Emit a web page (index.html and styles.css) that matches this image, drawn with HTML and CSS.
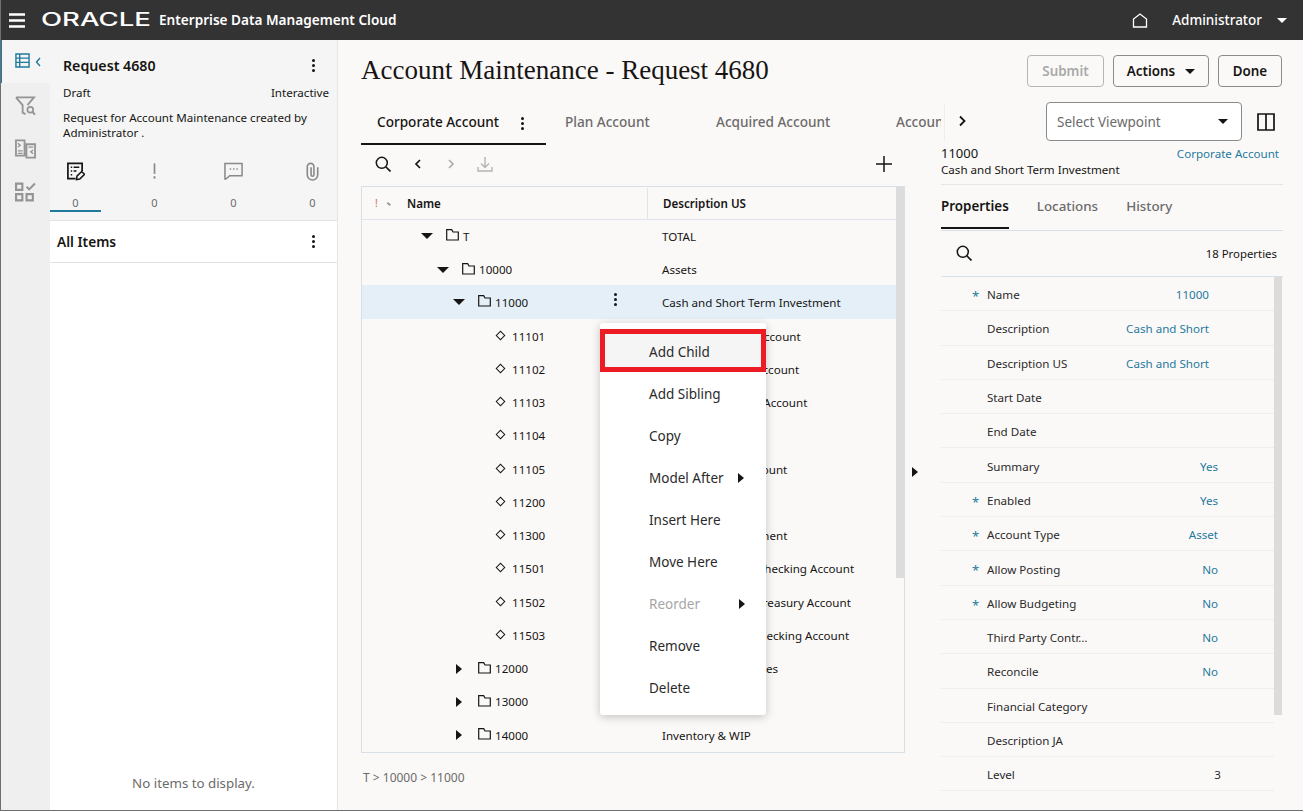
FILE: index.html
```html
<!DOCTYPE html>
<html lang="en">
<head>
<meta charset="utf-8">
<title>Account Maintenance - Request 4680</title>
<link rel="stylesheet" href="styles.css">
</head>
<body>
<header class="topbar">
  <svg class="burger" viewBox="0 0 16 15"><path d="M0 1.500h16M0 7.500h16M0 13.500h16" stroke="#fff" stroke-width="2.400"/></svg>
  <span class="logo-box"><span class="logo">ORACLE</span></span>
  <span class="product">Enterprise Data Management Cloud</span>
  <span class="spacer"></span>
  <svg class="home" viewBox="0 0 16 15"><path d="M1.500 14V6L8 1l6.500 5v8z" fill="none" stroke="#fff" stroke-width="1.300"/></svg>
  <span class="user">Administrator</span>
  <span class="caret-white"></span>
</header>
<div class="app">
  <nav class="rail">
    <div class="rail-item active">
      <svg class="rail-icon" viewBox="0 0 16 16"><path d="M1 1h14v14H1zM1 5.500h14M1 10h14M5 1v14" fill="none" stroke="#1f7a9e" stroke-width="1.500"/></svg>
      <svg class="rail-chev" viewBox="0 0 6 10"><path d="M5 1 1.500 5 5 9" fill="none" stroke="#1f7a9e" stroke-width="1.400"/></svg>
    </div>
    <div class="rail-item">
      <svg class="rail-big" viewBox="0 0 22 20"><path d="M1 1h19l-7 8M1 1l7 8v8l3 1.500" fill="none" stroke="#949494" stroke-width="1.900"/><circle cx="16" cy="14" r="3" fill="none" stroke="#949494" stroke-width="1.800"/><path d="m18 16 3 3" stroke="#949494" stroke-width="2"/></svg>
    </div>
    <div class="rail-item">
      <svg class="rail-big" viewBox="0 0 22 20"><path d="M1 1h9v16H1zM12 5h9v14h-9z" fill="none" stroke="#949494" stroke-width="1.900"/><path d="M3 4l2.500 2L3 8M3 12h5M3 14.500h5M14 8h5M19 11l-2.500 2 2.500 2" fill="none" stroke="#949494" stroke-width="1.400"/></svg>
    </div>
    <div class="rail-item">
      <svg class="rail-big" viewBox="0 0 20 18"><path d="M1 1h6v6H1zM1 11h6v6H1zM11 11h6v6h-6z" fill="none" stroke="#949494" stroke-width="2"/><path d="m11 4 2.500 2.500L19 1" fill="none" stroke="#949494" stroke-width="2"/></svg>
    </div>
  </nav>
  <aside class="side">
    <section class="side-top">
      <div class="req-head"><span class="req-title">Request 4680</span><span class="kebab"><i></i><i></i><i></i></span></div>
      <div class="req-meta"><span>Draft</span><span>Interactive</span></div>
      <p class="req-desc">Request for Account Maintenance created by Administrator .</p>
      <div class="counts">
        <div class="count on">
          <svg class="count-icon" viewBox="0 0 20 20"><path d="M10 18H2V2h15v8" fill="none" stroke="#161513" stroke-width="1.800"/><path d="M5 6h1.500M8 6h6M5 10h1.500M8 10h3M5 14h1.500" stroke="#161513" stroke-width="1.600"/><path d="m11 19 .5-3.500 5-5 3 3-5 5z" fill="none" stroke="#161513" stroke-width="1.600"/></svg>
          <span>0</span>
        </div>
        <div class="count">
          <svg class="count-icon" viewBox="0 0 20 20"><path d="M10 2v11" stroke="#8a8a8a" stroke-width="1.800"/><path d="M10 15.500v2.500" stroke="#8a8a8a" stroke-width="2"/></svg>
          <span>0</span>
        </div>
        <div class="count">
          <svg class="count-icon" viewBox="0 0 20 20"><path d="M1 2h18v13H6l-4 3.500H1z" fill="none" stroke="#8a8a8a" stroke-width="1.600"/><path d="M6 8h1.500M9.500 8H11M13 8h1.500" stroke="#8a8a8a" stroke-width="1.600"/></svg>
          <span>0</span>
        </div>
        <div class="count">
          <svg class="count-icon" viewBox="0 0 20 20"><path d="M15.500 6v8a5.500 5.500 0 0 1-11 0V5.500a3.500 3.500 0 0 1 7 0V14a1.500 1.500 0 0 1-3 0V6" fill="none" stroke="#8a8a8a" stroke-width="1.700"/></svg>
          <span>0</span>
        </div>
      </div>
    </section>
    <section class="side-list">
      <div class="list-head"><span>All Items</span><span class="kebab"><i></i><i></i><i></i></span></div>
      <div class="list-empty">No items to display.</div>
    </section>
  </aside>
  <main class="main">
    <div class="title-row">
      <h1>Account Maintenance - Request 4680</h1>
      <div class="btns">
        <button class="btn disabled">Submit</button>
        <button class="btn actions">Actions<span class="caret"></span></button>
        <button class="btn done">Done</button>
      </div>
    </div>
    <div class="panes">
      <section class="center">
        <div class="tabs">
          <div class="tab current"><span>Corporate Account</span><span class="kebab"><i></i><i></i><i></i></span></div>
          <div class="tab t2">Plan Account</div>
          <div class="tab t3">Acquired Account</div>
          <div class="tab t4">Account Mapping</div>
        </div>
        <div class="tools">
          <svg class="tool search" viewBox="0 0 16 16"><circle cx="6.800" cy="6.800" r="5.500" fill="none" stroke="#161513" stroke-width="1.500"/><path d="m11 11 4.500 4.500" stroke="#161513" stroke-width="1.700"/></svg>
          <svg class="tool chev" viewBox="0 0 8 12"><path d="M6 2 2 6l4 4" fill="none" stroke="#161513" stroke-width="1.700"/></svg>
          <svg class="tool chev off" viewBox="0 0 8 12"><path d="m2 2 4 4-4 4" fill="none" stroke="#aaa" stroke-width="1.600"/></svg>
          <svg class="tool dl" viewBox="0 0 16 16"><path d="M8 1v10M4 7.500l4 4 4-4M1 11v4h14v-4" fill="none" stroke="#b4b4b4" stroke-width="1.400"/></svg>
          <svg class="tool plus" viewBox="0 0 16 16"><path d="M8 0v16M0 8h16" stroke="#161513" stroke-width="1.500"/></svg>
        </div>
        <div class="tree-area">
          <div class="grid">
            <div class="grid-body">
              <div class="row head">
                <div class="cell-name"><span class="warn">!</span><span class="sort"></span><b>Name</b></div>
                <div class="cell-desc"><b>Description US</b></div>
              </div>
              <div class="row"><div class="cell-name l0"><span class="tri down"></span><svg class="folder" viewBox="0 0 13 12"><path d="M.7.7h5l1.300 2.300h5.300v8H.7z" fill="none" stroke="#161513" stroke-width="1.200"/></svg>T</div><div class="cell-desc">TOTAL</div></div>
              <div class="row"><div class="cell-name l1"><span class="tri down"></span><svg class="folder" viewBox="0 0 13 12"><path d="M.7.7h5l1.300 2.300h5.300v8H.7z" fill="none" stroke="#161513" stroke-width="1.200"/></svg>10000</div><div class="cell-desc">Assets</div></div>
              <div class="row selected"><div class="cell-name l2"><span class="tri down"></span><svg class="folder" viewBox="0 0 13 12"><path d="M.7.7h5l1.300 2.300h5.300v8H.7z" fill="none" stroke="#161513" stroke-width="1.200"/></svg>11000<span class="kebab row-kebab"><i></i><i></i><i></i></span></div><div class="cell-desc">Cash and Short Term Investment</div></div>
              <div class="row"><div class="cell-name leaf"><span class="diamond"></span>11101</div><div class="cell-desc">Cash - Operating Account</div></div>
              <div class="row"><div class="cell-name leaf"><span class="diamond"></span>11102</div><div class="cell-desc">Cash - Collection Account</div></div>
              <div class="row"><div class="cell-name leaf"><span class="diamond"></span>11103</div><div class="cell-desc">Cash - Investment Account</div></div>
              <div class="row"><div class="cell-name leaf"><span class="diamond"></span>11104</div><div class="cell-desc">Petty Cash</div></div>
              <div class="row"><div class="cell-name leaf"><span class="diamond"></span>11105</div><div class="cell-desc">Cash - Deposit Account</div></div>
              <div class="row"><div class="cell-name leaf"><span class="diamond"></span>11200</div><div class="cell-desc">Cash in Bank</div></div>
              <div class="row"><div class="cell-name leaf"><span class="diamond"></span>11300</div><div class="cell-desc">Short Term Investment</div></div>
              <div class="row"><div class="cell-name leaf"><span class="diamond"></span>11501</div><div class="cell-desc">Cash - Euro Bank Checking Account</div></div>
              <div class="row"><div class="cell-name leaf"><span class="diamond"></span>11502</div><div class="cell-desc">Cash - Euro Bank Treasury Account</div></div>
              <div class="row"><div class="cell-name leaf"><span class="diamond"></span>11503</div><div class="cell-desc">Cash - US Dollar Checking Account</div></div>
              <div class="row"><div class="cell-name l2"><span class="tri right"></span><svg class="folder" viewBox="0 0 13 12"><path d="M.7.7h5l1.300 2.300h5.300v8H.7z" fill="none" stroke="#161513" stroke-width="1.200"/></svg>12000</div><div class="cell-desc">Accounts Receivables</div></div>
              <div class="row"><div class="cell-name l2"><span class="tri right"></span><svg class="folder" viewBox="0 0 13 12"><path d="M.7.7h5l1.300 2.300h5.300v8H.7z" fill="none" stroke="#161513" stroke-width="1.200"/></svg>13000</div><div class="cell-desc">Prepaids</div></div>
              <div class="row"><div class="cell-name l2"><span class="tri right"></span><svg class="folder" viewBox="0 0 13 12"><path d="M.7.7h5l1.300 2.300h5.300v8H.7z" fill="none" stroke="#161513" stroke-width="1.200"/></svg>14000</div><div class="cell-desc">Inventory &amp; WIP</div></div>
            </div>
            <div class="scroll-track"><div class="scroll-thumb"></div></div>
            <ul class="menu">
              <li class="flagged">Add Child</li>
              <li>Add Sibling</li>
              <li>Copy</li>
              <li>Model After<span class="tri right sub"></span></li>
              <li>Insert Here</li>
              <li>Move Here</li>
              <li class="muted">Reorder<span class="tri right sub"></span></li>
              <li>Remove</li>
              <li>Delete</li>
            </ul>
          </div>
          <div class="splitter"><span class="tri right"></span></div>
        </div>
        <div class="crumb">T &gt; 10000 &gt; 11000</div>
      </section>
      <section class="detail">
        <div class="view-row">
          <svg class="view-chev" viewBox="0 0 8 12"><path d="m2 1.500 4.500 4.500L2 10.500" fill="none" stroke="#161513" stroke-width="1.800"/></svg>
          <div class="select"><span>Select Viewpoint</span><span class="caret"></span></div>
          <svg class="split" viewBox="0 0 18 18"><path d="M1 1h16v16H1zM9 1v16" fill="none" stroke="#161513" stroke-width="1.700"/></svg>
        </div>
        <div class="node-head">
          <div class="node-line"><span class="node-id">11000</span><span class="link">Corporate Account</span></div>
          <div class="node-desc">Cash and Short Term Investment</div>
        </div>
        <div class="d-tabs">
          <span class="d-tab on">Properties</span><span class="d-tab">Locations</span><span class="d-tab">History</span>
        </div>
        <div class="prop-tools">
          <svg class="tool search" viewBox="0 0 16 16"><circle cx="6.800" cy="6.800" r="5.500" fill="none" stroke="#161513" stroke-width="1.500"/><path d="m11 11 4.500 4.500" stroke="#161513" stroke-width="1.700"/></svg>
          <span>18 Properties</span>
        </div>
        <div class="props">
          <div class="prop-list">
            <div class="prop req"><span class="p-label">Name</span><span class="p-val wide">11000</span></div>
            <div class="prop"><span class="p-label">Description</span><span class="p-val wide">Cash and Short</span></div>
            <div class="prop"><span class="p-label">Description US</span><span class="p-val wide">Cash and Short</span></div>
            <div class="prop"><span class="p-label">Start Date</span></div>
            <div class="prop"><span class="p-label">End Date</span></div>
            <div class="prop"><span class="p-label">Summary</span><span class="p-val">Yes</span></div>
            <div class="prop req"><span class="p-label">Enabled</span><span class="p-val">Yes</span></div>
            <div class="prop req"><span class="p-label">Account Type</span><span class="p-val">Asset</span></div>
            <div class="prop req"><span class="p-label">Allow Posting</span><span class="p-val">No</span></div>
            <div class="prop req"><span class="p-label">Allow Budgeting</span><span class="p-val">No</span></div>
            <div class="prop"><span class="p-label">Third Party Contr…</span><span class="p-val">No</span></div>
            <div class="prop"><span class="p-label">Reconcile</span><span class="p-val">No</span></div>
            <div class="prop"><span class="p-label">Financial Category</span></div>
            <div class="prop"><span class="p-label">Description JA</span></div>
            <div class="prop"><span class="p-label">Level</span><span class="p-val plain">3</span></div>
          </div>
          <div class="prop-scroll"></div>
        </div>
      </section>
    </div>
  </main>
</div>
</body>
</html>
```
FILE: styles.css
```css
* { box-sizing: border-box; }
html, body { margin: 0; padding: 0; height: 100%; overflow: hidden; }
body {
  width: 1303px; height: 811px;
  display: flex; flex-direction: column;
  font-family: "Noto Sans", "Open Sans", sans-serif;
  font-size: 11.600px; color: #161513;
  background: #fbf9f8;
  border-left: 1px solid #6f6f6f;
  border-bottom: 1px solid #6f6f6f;
}
.topbar { height: 40px; flex: none; background: #333; display: flex; align-items: center; color: #fff; margin-left: -1px; }
.burger { width: 16px; height: 15px; margin-left: 9px; }
.logo-box { width: 108px; margin-left: 17px; overflow: visible; }
.logo { display: inline-block; font: 500 18px/18px Inter, sans-serif; transform: scaleX(1.530); transform-origin: left center; color: #fff; margin-left: -1px; }
.product { margin-left: 9px; font-size: 13.600px; font-weight: 600; margin-top: -2px; }
.spacer { flex: 1; }
.home { width: 16px; height: 15px; margin-right: 24px; }
.user { font-size: 13.500px; font-weight: 500; margin-right: 15px; }
.caret-white { width: 0; height: 0; border: 5px solid transparent; border-top: 5px solid #fff; border-bottom: 0; margin-right: 16px; }

.app { flex: 1; min-height: 0; display: flex; }
.rail { width: 49px; flex: none; background: #efefef; }
.rail-item { height: 43px; display: flex; align-items: center; justify-content: center; padding-top: 2px; }
.rail-item.active { background: #f5f5f5; border-left: 2px solid #1f7a9e; margin-left: -1px; width: 50px; justify-content: flex-start; padding: 0 0 2px 13px; gap: 5px; }
.rail-icon { width: 15px; height: 15px; }
.rail-chev { width: 6px; height: 10px; margin-top: 3px; }
.rail-big { width: 21px; height: 20px; margin-top: 1px; }

.side { width: 288px; flex: none; display: flex; flex-direction: column; background: #fff; border-right: 1px solid #e6e6e6; }
.side-top { height: 181px; flex: none; background: #f5f5f5; border-bottom: 1px solid #dfe4e8; padding-top: 15px; }
.req-head { display: flex; justify-content: space-between; align-items: center; padding: 0 22px 0 13px; height: 20px; }
.req-title { font-size: 14.200px; font-weight: 600; }
.kebab { display: inline-flex; flex-direction: column; gap: 2px; width: 3px; }
.kebab i { display: block; width: 3px; height: 3px; border-radius: 50%; background: #161513; }
.req-meta { display: flex; justify-content: space-between; padding: 0 8px 0 13px; margin-top: 10px; line-height: 16px; }
.req-desc { margin: 9px 8px 0 13px; line-height: 15px; }
.counts { display: grid; grid-template-columns: repeat(4, 51px); gap: 28px; margin-top: 21px; }
.count { height: 51px; display: flex; flex-direction: column; align-items: center; color: #6b6b6b; font-size: 11px; border-bottom: 2px solid transparent; }
.count.on { border-bottom-color: #1f7a9e; }
.count-icon { width: 19px; height: 20px; margin-bottom: 14px; flex: none; }
.count span { line-height: 15px; }
.side-list { flex: 1; display: flex; flex-direction: column; }
.list-head { height: 42px; border-bottom: 1px solid #dfe4e8; display: flex; justify-content: space-between; align-items: center; padding: 0 22px 0 7px; font-size: 13.700px; font-weight: 600; }
.list-empty { margin-top: auto; margin-bottom: 18px; text-align: center; color: #6b6b6b; font-size: 13.300px; line-height: 18px; }

.main { flex: 1; min-width: 0; padding-left: 23px; display: flex; flex-direction: column; }
.title-row { height: 62px; flex: none; display: flex; justify-content: space-between; padding: 14px 21px 0 0; }
h1 { margin: 0; font: 400 27px/32px "Liberation Serif", serif; color: #161513; }
.btns { display: flex; gap: 9px; margin-top: 1px; }
.btn { height: 32px; padding: 0; border: 1px solid #8b8b8b; border-radius: 4px; background: #fbf9f8; font: 600 13.400px "Noto Sans", sans-serif; color: #161513; display: inline-flex; align-items: center; justify-content: center; }
.btn.disabled { width: 77px; color: #a9a9a9; border-color: #b5b5b5; }
.btn.actions { width: 96px; gap: 10px; }
.btn.done { width: 64px; }
.caret { display: inline-block; width: 0; height: 0; border: 5px solid transparent; border-top: 5px solid #161513; border-bottom: 0; }

.panes { flex: 1; min-height: 0; display: flex; }
.center { width: 580px; flex: none; display: flex; flex-direction: column; }
.tabs { height: 43px; flex: none; display: flex; overflow: hidden; align-items: stretch; font-size: 13.600px; font-weight: 500; color: #6b6b6b; }
.tab { white-space: nowrap; padding-top: 10px; flex: none; }
.tab.current { width: 185px; color: #161513; border-bottom: 2px solid #161513; padding-left: 16px; display: flex; align-items: flex-start; justify-content: space-between; padding-right: 22px; }
.tab.current .kebab { margin-top: 5px; }
.t2 { margin-left: 19px; width: 151px; }
.t3 { width: 180px; }

.tools { height: 41px; flex: none; display: flex; align-items: center; padding-left: 14px; padding-bottom: 4px; }
.tool { flex: none; }
.tool.search { width: 16px; height: 16px; }
.tool.chev { width: 8px; height: 12px; margin-left: 23px; }
.tool.chev.off { margin-left: 25px; }
.tool.dl { width: 16px; height: 16px; margin-left: 22px; margin-top: 1px; }
.tool.plus { width: 16px; height: 16px; margin-left: auto; margin-right: 49px; }

.tree-area { display: flex; flex: none; }
.grid { position: relative; width: 544px; height: 567px; border: 1px solid #d7e0e8; display: flex; }
.grid-body { flex: 1; min-width: 0; }
.scroll-track { width: 8px; flex: none; }
.scroll-thumb { height: 391px; background: #dcdcdc; }
.row { height: 33.250px; display: flex; align-items: center; }
.row.head { height: 32.700px; padding-top: 1px; border-bottom: 1px solid #dfe5ea; }
.row.head b { font-weight: 600; }
.row.selected { background: #e4eff8; margin-top: -1px; height: 34.250px; }
.cell-name { width: 286px; height: 100%; flex: none; display: flex; align-items: center; position: relative; }
.head .cell-name { border-right: 1px solid #dfe5ea; padding-left: 13px; }
.cell-desc { padding-left: 14px; white-space: nowrap; }
.head .cell-desc { padding-left: 15px; }
.warn { color: #c9694f; width: 10px; font-size: 10px; }
.sort { width: 4px; height: 1.500px; background: #999; transform: rotate(40deg); margin-right: 16px; margin-left: 2px; }
.tri { display: inline-block; width: 0; height: 0; flex: none; }
.tri.down { border: 6px solid transparent; border-top: 6px solid #161513; border-bottom: 0; margin-right: 13px; margin-left: 1px; }
.tri.right { border: 5px solid transparent; border-left: 6px solid #161513; border-right: 0; }
.l0 { padding-left: 58px; }
.l1 { padding-left: 74px; }
.l2 { padding-left: 90px; }
.l2 > .tri.right { margin-left: 4px; margin-right: 16px; }
.leaf { padding-left: 133px; }
.folder { width: 13px; height: 12px; margin-right: 4px; flex: none; margin-top: -2px; }
.diamond { width: 7px; height: 7px; border: 1.500px solid #161513; transform: rotate(45deg); margin: -2px 8px 0 2px; flex: none; }
.row-kebab { position: absolute; left: 252px; top: 8px; }

.menu { position: absolute; left: 238px; top: 136px; width: 166px; margin: 0; padding: 6px 0; list-style: none; background: #fff; border-radius: 3px; box-shadow: 0 2px 10px rgba(0,0,0,.22); font-size: 13.500px; color: #2a2a2a; z-index: 5; }
.menu li { height: 42px; display: flex; align-items: center; padding-left: 49px; }
.menu .flagged { height: 43px; margin-bottom: 1px; border: 5px solid #ed1c24; padding-left: 44px; padding-top: 3px; background: #f5f5f5; }
.menu .muted { color: #a6a6a6; }
.tri.sub { margin-left: 14px; margin-top: -1px; }
.menu li:nth-child(7) .tri.sub { margin-left: 39px; }
.splitter { width: 36px; flex: none; display: flex; align-items: center; padding-left: 7px; padding-top: 4px; }
.crumb { margin-top: 16px; padding-left: 2px; color: #6b6b6b; line-height: 18px; font-size: 12px; }

.detail { width: 342px; flex: none; display: flex; flex-direction: column; }
.view-row { height: 43px; flex: none; display: flex; align-items: center; }
.view-row::before { content: ""; width: 1px; height: 38px; margin: 0 0 4px 3px; background: #ededed; flex: none; }
.view-chev { width: 8px; height: 12px; margin-left: 13px; margin-bottom: 6px; }
.select { width: 196px; height: 39px; margin-left: 80px; background: #fff; border: 1px solid #8b8b8b; border-radius: 4px; display: flex; align-items: center; justify-content: space-between; padding: 0 13px 0 10px; font-size: 13.500px; color: #6b6b6b; margin-bottom: 4px; }
.split { width: 18px; height: 18px; margin-left: 15px; margin-bottom: 4px; }
.node-head { height: 40px; border-bottom: 1px solid #e6e6e6; flex: none; }
.node-line { display: flex; justify-content: space-between; align-items: center; height: 18px; padding-right: 4px; margin-top: -1px; }
.node-id { font-size: 13px; }
.link { color: #1f7a9e; }
.node-desc { line-height: 15px; margin-top: 0; }
.d-tabs { height: 46px; flex: none; display: flex; gap: 28px; border-bottom: 1px solid #d7e0e8; font-size: 13.400px; color: #6b6b6b; font-weight: 500; }
.d-tab { padding-top: 12px; height: 44px; }
.d-tab.on { color: #161513; font-weight: 600; border-bottom: 2px solid #161513; }
.prop-tools { height: 46px; flex: none; display: flex; align-items: center; justify-content: space-between; padding: 0 6px 0 15px; border-bottom: 1px solid #d7e0e8; font-size: 11.400px; }
.prop-tools .search { margin-bottom: 2px; }
.props { flex: 1; display: flex; min-height: 0; }
.prop-list { width: 333px; flex: none; }
.prop { height: 34.300px; display: flex; align-items: center; border-bottom: 1px solid #eeeeee; padding: 2px 0 0 46px; position: relative; color: #2a2a2a; }
.prop.req::before { content: "*"; position: absolute; left: 31px; top: 10px; color: #1f7a9e; font-size: 13px; }
.p-label { white-space: nowrap; }
.p-val { margin-left: auto; margin-right: 56px; color: #1f7a9e; white-space: nowrap; }
.p-val.wide { margin-right: 65px; }
.p-val.plain { color: #2a2a2a; margin-right: 53px; }
.prop-scroll { width: 8px; height: 438px; background: #dcdcdc; flex: none; }
```
